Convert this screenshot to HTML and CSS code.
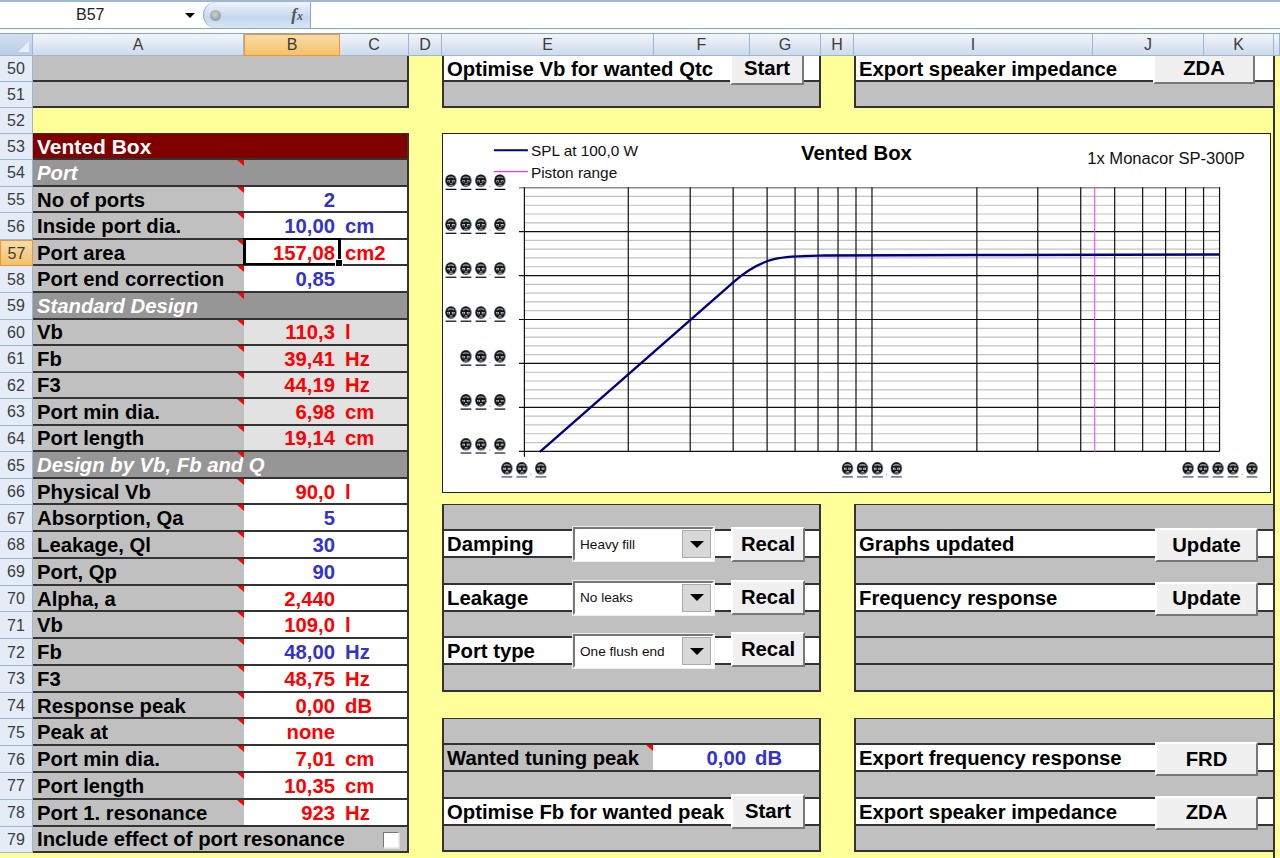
FILE: index.html
```html
<!DOCTYPE html>
<html>
<head>
<meta charset="utf-8">
<title>Vented Box</title>
<link rel="stylesheet" href="styles.css">
</head>
<body>
<svg class="defs" width="0" height="0">
  <symbol id="sk" viewBox="0 0 12 16">
    <ellipse cx="6" cy="6.5" rx="6" ry="6.5" fill="#7f93ad"/>
    <ellipse cx="5.8" cy="6.4" rx="5.2" ry="6" fill="#161616"/>
    <path d="M2.4 3.6C4 1.8 8 1.8 9.6 3.6L8.6 4.4C7 3.3 5 3.3 3.4 4.4Z" fill="#8d8d8d"/>
    <path d="M2.2 6H5V8.2H2.8Z" fill="#e4e4e4"/>
    <path d="M6.8 6H9.8L9.2 8.2H7Z" fill="#e4e4e4"/>
    <path d="M3.2 6.6H4.4V7.8H3.2ZM7.6 6.6H8.8V7.8H7.6Z" fill="#000"/>
    <path d="M5 9.2H7.4V10.2H5ZM4 10.8H8.2V11.6H4Z" fill="#a8a8a8"/>
    <path d="M.6 14.6H11.4V15.8H.6Z" fill="#000"/>
  </symbol>
</svg>

<header class="fbar">
  <div class="namebox"><span class="cellref">B57</span><i class="caret"></i></div>
  <div class="fxbtn"><i class="ball"></i><em class="fx">f<small>x</small></em></div>
  <div class="finput"></div>
</header>

<nav class="cols">
  <div class="corner"><i></i></div>
  <div class="ch w211">A</div><div class="ch w96 on">B</div><div class="ch w69">C</div><div class="ch w33">D</div>
  <div class="ch w212">E</div><div class="ch w96">F</div><div class="ch w71">G</div><div class="ch w33">H</div>
  <div class="ch w239">I</div><div class="ch w111">J</div><div class="ch w70">K</div><div class="ch rest"></div>
</nav>

<main class="sheet">
  <div class="heads">
    <div class="rh r50">50</div><div class="rh r51">51</div><div class="rh r52">52</div>
    <div class="rh r">53</div><div class="rh r">54</div><div class="rh r">55</div><div class="rh r">56</div>
    <div class="rh r on">57</div><div class="rh r">58</div><div class="rh r">59</div><div class="rh r">60</div>
    <div class="rh r">61</div><div class="rh r">62</div><div class="rh r">63</div><div class="rh r">64</div>
    <div class="rh r">65</div><div class="rh r">66</div>
    <div class="rh s">67</div><div class="rh s">68</div><div class="rh s">69</div><div class="rh s">70</div>
    <div class="rh s">71</div><div class="rh s">72</div><div class="rh s">73</div><div class="rh s">74</div>
    <div class="rh s">75</div><div class="rh s">76</div><div class="rh s">77</div><div class="rh s">78</div><div class="rh s">79</div>
  </div>

  <section class="left">
    <div class="row r50 gray"></div>
    <div class="row r51 gray"></div>
    <div class="r52"></div>
    <div class="row r maroon top">Vented Box</div>
    <div class="row r sect"><span class="a m">Port</span></div>
    <div class="row r"><span class="a m">No of ports</span><span class="b blue">2</span><span class="c"></span></div>
    <div class="row r"><span class="a m">Inside port dia.</span><span class="b blue">10,00</span><span class="c blue">cm</span></div>
    <div class="row r"><span class="a m">Port area</span><span class="b red sel">157,08</span><span class="c red">cm2</span></div>
    <div class="row r"><span class="a m">Port end correction</span><span class="b blue">0,85</span><span class="c"></span></div>
    <div class="row r sect"><span class="a m">Standard Design</span></div>
    <div class="row r lite"><span class="a m">Vb</span><span class="b red">110,3</span><span class="c red">l</span></div>
    <div class="row r lite"><span class="a m">Fb</span><span class="b red">39,41</span><span class="c red">Hz</span></div>
    <div class="row r lite"><span class="a m">F3</span><span class="b red">44,19</span><span class="c red">Hz</span></div>
    <div class="row r lite"><span class="a m">Port min dia.</span><span class="b red">6,98</span><span class="c red">cm</span></div>
    <div class="row r lite"><span class="a m">Port length</span><span class="b red">19,14</span><span class="c red">cm</span></div>
    <div class="row r sect"><span class="a m">Design by Vb, Fb and Q</span></div>
    <div class="row r"><span class="a m">Physical Vb</span><span class="b red">90,0</span><span class="c red">l</span></div>
    <div class="row s"><span class="a m">Absorption, Qa</span><span class="b blue">5</span><span class="c"></span></div>
    <div class="row s"><span class="a m">Leakage, Ql</span><span class="b blue">30</span><span class="c"></span></div>
    <div class="row s"><span class="a m">Port, Qp</span><span class="b blue">90</span><span class="c"></span></div>
    <div class="row s"><span class="a m">Alpha, a</span><span class="b red">2,440</span><span class="c"></span></div>
    <div class="row s"><span class="a m">Vb</span><span class="b red">109,0</span><span class="c red">l</span></div>
    <div class="row s"><span class="a m">Fb</span><span class="b blue">48,00</span><span class="c blue">Hz</span></div>
    <div class="row s"><span class="a m">F3</span><span class="b red">48,75</span><span class="c red">Hz</span></div>
    <div class="row s"><span class="a m">Response peak</span><span class="b red">0,00</span><span class="c red">dB</span></div>
    <div class="row s"><span class="a m">Peak at</span><span class="b red">none</span><span class="c"></span></div>
    <div class="row s"><span class="a m">Port min dia.</span><span class="b red">7,01</span><span class="c red">cm</span></div>
    <div class="row s"><span class="a m">Port length</span><span class="b red">10,35</span><span class="c red">cm</span></div>
    <div class="row s"><span class="a m">Port 1. resonance</span><span class="b red">923</span><span class="c red">Hz</span></div>
    <div class="row s gray chk-row"><span class="lbl">Include effect of port resonance</span><i class="chk"></i></div>
  </section>

  <section class="zone">
    <div class="pair">
      <div class="mid">
        <div class="row r50 white"><span class="lbl">Optimise Vb for wanted Qtc</span><button class="btn b-start0">Start</button></div>
        <div class="row r51 gray"></div>
        <div class="r52"></div>
      </div>
      <div class="rgt">
        <div class="row r50 white"><span class="lbl">Export speaker impedance</span><button class="btn b-zda0">ZDA</button></div>
        <div class="row r51 gray"></div>
        <div class="r52"></div>
      </div>
    </div>

    <div class="chart-slot">
      <svg class="chart" viewBox="442 133 830 360" width="830" height="360">
        <path class="minor" d="M524 196.3H1220M524 205.1H1220M524 213.9H1220M524 222.7H1220M524 240.3H1220M524 249.1H1220M524 257.9H1220M524 266.7H1220M524 284.3H1220M524 293.1H1220M524 301.9H1220M524 310.7H1220M524 328.3H1220M524 337.1H1220M524 345.9H1220M524 354.7H1220M524 372.3H1220M524 381.1H1220M524 389.9H1220M524 398.7H1220M524 416.3H1220M524 425.1H1220M524 433.9H1220M524 442.7H1220"/>
        <path class="topline" d="M519 187.5H1221"/>
        <path class="major" d="M519 231.5H1220M519 275.5H1220M519 319.5H1220M519 363.5H1220M519 407.5H1220M519 451.5H1220"/>
        <path class="major" d="M524.5 187V457M628.5 187V452M690.5 187V452M733.5 187V452M767.5 187V452M795.5 187V452M818.5 187V452M838.5 187V452M856.5 187V452M872.5 187V452M977.5 187V452M1038.5 187V452M1081.5 187V452M1115.5 187V452M1143.5 187V452M1166.5 187V452M1186.5 187V452M1204.5 187V452M1220.5 187V452"/>
        <path class="piston" d="M1095.5 187V452"/>
        <path class="spl" d="M540 452L735 281C765 255 785 256 825 255.5L975 255L1220 254.5"/>
        <path class="leg-spl" d="M494 150H528"/>
        <path class="leg-pis" d="M494 171.5H528"/>
        <text class="legend" x="531" y="156">SPL at 100,0 W</text>
        <text class="legend" x="531" y="178">Piston range</text>
        <text class="title" x="857" y="160" text-anchor="middle">Vented Box</text>
        <text class="driver" x="1088" y="164">1x Monacor SP-300P</text>
        <g class="ticks">
          <use href="#sk" x="445" y="174" width="12" height="16"/><use href="#sk" x="460" y="174" width="12" height="16"/><use href="#sk" x="475" y="174" width="12" height="16"/><use href="#sk" x="494" y="174" width="12" height="16"/>
          <use href="#sk" x="445" y="218" width="12" height="16"/><use href="#sk" x="460" y="218" width="12" height="16"/><use href="#sk" x="475" y="218" width="12" height="16"/><use href="#sk" x="494" y="218" width="12" height="16"/>
          <use href="#sk" x="445" y="262" width="12" height="16"/><use href="#sk" x="460" y="262" width="12" height="16"/><use href="#sk" x="475" y="262" width="12" height="16"/><use href="#sk" x="494" y="262" width="12" height="16"/>
          <use href="#sk" x="445" y="306" width="12" height="16"/><use href="#sk" x="460" y="306" width="12" height="16"/><use href="#sk" x="475" y="306" width="12" height="16"/><use href="#sk" x="494" y="306" width="12" height="16"/>
          <use href="#sk" x="460" y="350" width="12" height="16"/><use href="#sk" x="475" y="350" width="12" height="16"/><use href="#sk" x="494" y="350" width="12" height="16"/>
          <use href="#sk" x="460" y="394" width="12" height="16"/><use href="#sk" x="475" y="394" width="12" height="16"/><use href="#sk" x="494" y="394" width="12" height="16"/>
          <use href="#sk" x="460" y="438" width="12" height="16"/><use href="#sk" x="475" y="438" width="12" height="16"/><use href="#sk" x="494" y="438" width="12" height="16"/>
          <use href="#sk" x="501" y="462" width="12" height="16"/><use href="#sk" x="516" y="462" width="12" height="16"/><use href="#sk" x="535" y="462" width="12" height="16"/>
          <use href="#sk" x="842" y="462" width="12" height="16"/><use href="#sk" x="857" y="462" width="12" height="16"/><use href="#sk" x="872" y="462" width="12" height="16"/><use href="#sk" x="891" y="462" width="12" height="16"/>
          <use href="#sk" x="1183" y="462" width="12" height="16"/><use href="#sk" x="1198" y="462" width="12" height="16"/><use href="#sk" x="1213" y="462" width="12" height="16"/><use href="#sk" x="1228" y="462" width="12" height="16"/><use href="#sk" x="1247" y="462" width="12" height="16"/>
        </g>
        <path class="dots" d="M490 186v1M490 230v1M490 274v1M490 318v1M490 362v1M490 406v1M490 450v1M531 474v1M887 474v1M1243 474v1"/>
      </svg>
    </div>

    <div class="pair">
      <div class="mid">
        <div class="row s gray top"></div>
        <div class="row s white"><span class="lbl">Damping</span><div class="combo"><span>Heavy fill</span><i class="drop"></i></div><button class="btn b-recal">Recal</button></div>
        <div class="row s gray"></div>
        <div class="row s white"><span class="lbl">Leakage</span><div class="combo"><span>No leaks</span><i class="drop"></i></div><button class="btn b-recal up1">Recal</button></div>
        <div class="row s gray"></div>
        <div class="row s white"><span class="lbl">Port type</span><div class="combo"><span>One flush end</span><i class="drop"></i></div><button class="btn b-recal up2">Recal</button></div>
        <div class="row s gray"></div>
        <div class="s"></div>
        <div class="row s gray top"></div>
        <div class="row s white"><span class="a2 m">Wanted tuning peak</span><span class="b2 blue">0,00</span><span class="c2 blue">dB</span></div>
        <div class="row s gray"></div>
        <div class="row s white"><span class="lbl">Optimise Fb for wanted peak</span><button class="btn b-recal up1">Start</button></div>
        <div class="row s gray"></div>
      </div>
      <div class="rgt">
        <div class="row s gray top"></div>
        <div class="row s white"><span class="lbl">Graphs updated</span><button class="btn b-wide">Update</button></div>
        <div class="row s gray"></div>
        <div class="row s white"><span class="lbl">Frequency response</span><button class="btn b-wide">Update</button></div>
        <div class="row s gray"></div>
        <div class="row s gray"></div>
        <div class="row s gray"></div>
        <div class="s"></div>
        <div class="row s gray top"></div>
        <div class="row s white"><span class="lbl">Export frequency response</span><button class="btn b-wide">FRD</button></div>
        <div class="row s gray"></div>
        <div class="row s white"><span class="lbl">Export speaker impedance</span><button class="btn b-wide">ZDA</button></div>
        <div class="row s gray"></div>
      </div>
    </div>
  </section>
</main>
</body>
</html>
```
FILE: styles.css
```css
* { box-sizing: border-box; }
html, body { margin: 0; height: 858px; overflow: hidden; }
body { font-family: "Liberation Sans", Arial, sans-serif; background: #ffff99; color: #000; }
.defs { position: absolute; }

/* formula bar */
.fbar { height: 34px; display: flex; background: #fff; border-top: 2px solid #9db8d4; padding-bottom: 5px; position: relative; border-bottom: 1px solid #86a6c6; }
.fbar::after { content: ""; position: absolute; left: 0; right: 0; bottom: 4px; height: 1px; background: #86a6c6; }
.namebox { width: 203px; display: flex; align-items: center; position: relative; font-size: 16px; color: #222; }
.cellref { margin-left: 76px; }
.caret { margin-left: 81px; width: 0; height: 0; border: 5px solid transparent; border-top: 5px solid #000; border-bottom: 0; }
.fxbtn { width: 108px; display: flex; align-items: center; justify-content: space-between; padding: 0 7px 0 6px; border: 1px solid #86a6c6; border-width: 0 1px 0 1px; border-radius: 13px 0 0 13px / 13px 0 0 13px; background: linear-gradient(#eef4fb, #c5d8ee 60%, #d8e5f4); }
.ball { width: 11px; height: 11px; border-radius: 50%; background: radial-gradient(circle at 45% 40%, #d0d0d0, #7c8894); }
.fx { font: italic bold 17px "Liberation Serif", serif; color: #555; }
.fx small { font-size: 12px; }
.finput { flex: 1; }

/* column headers */
.cols { height: 22px; display: flex; background: #fff; }
.corner { width: 33px; background: linear-gradient(#d3e0f0, #b8cde6); border: 1px solid #9eb6ce; border-width: 0 1px 1px 0; position: relative; }
.corner i { position: absolute; right: 3px; bottom: 3px; width: 0; height: 0; border-style: solid; border-width: 0 0 11px 11px; border-color: transparent transparent #e8eff8 transparent; }
.ch { display: flex; align-items: center; justify-content: center; font-size: 16px; color: #3c3c3c; background: linear-gradient(#f3f6fb, #dbe5f1 60%, #cddbec); border-right: 1px solid #9eb6ce; border-bottom: 1px solid #9eb6ce; }
.ch.on { background: linear-gradient(#f9dcaa, #f2c267); border: 1px solid #f29536; }
.w211 { width: 211px; } .w96 { width: 96px; } .w69 { width: 69px; } .w33 { width: 33px; }
.w212 { width: 212px; } .w71 { width: 71px; } .w239 { width: 239px; } .w111 { width: 111px; } .w70 { width: 70px; }
.rest { flex: 1; }

/* grid */
.sheet { display: flex; height: 802px; background: #ffff99; overflow: hidden; }
.heads { width: 33px; flex: none; }
.rh { display: flex; align-items: center; justify-content: center; font-size: 16px; color: #3c3c3c; background: #e4ecf7; border-right: 1px solid #9eb6ce; border-bottom: 1px solid #9eb6ce; padding-top: 1px; }
.rh.on { background: linear-gradient(#f9dcaa, #f2c267); border: 1px solid #f29536; }
.r50 { height: 26.4px; } .r51 { height: 26.1px; } .r52 { height: 25.2px; }
.r { height: 26.56px; } .s { height: 26.77px; }

.left { width: 376px; flex: none; }
.zone { width: 833px; margin-left: 33px; flex: none; border-right: 2px solid #333; }
.pair { display: flex; gap: 33px; }
.mid { width: 379px; flex: none; }
.rgt { width: 419px; flex: none; margin-right: -2px; }
.mid .row { border-left: 2px solid #333; }
.rgt .row { border-left: 2px solid #333; border-right: 0; }

.row { display: flex; align-items: center; font-size: 20.3px; font-weight: bold; border-bottom: 2px solid #333; border-right: 2px solid #333; position: relative; background: #fff; white-space: nowrap; }
.top { box-shadow: 0 -1px 0 #333; }
.gray { background: #c0c0c0; }
.white { background: #fff; }
.maroon { background: #800000; color: #fff; padding-left: 4px; font-size: 21px; padding-top: 2px; }
.sect { background: #969696; color: #fff; font-style: italic; }
.a { width: 211px; height: 100%; padding-left: 4px; display: flex; align-items: center; background: #c0c0c0; position: relative; flex: none; }
.sect .a { background: #969696; }
.m::after { content: ""; position: absolute; top: 0; right: 0; width: 0; height: 0; border-style: solid; border-width: 0 7px 6px 0; border-color: transparent #ff0000 transparent transparent; }
.b { width: 96px; height: 100%; padding-right: 5px; display: flex; align-items: center; justify-content: flex-end; flex: none; position: relative; }
.c { padding-left: 5px; height: 100%; flex: 1; display: flex; align-items: center; }
.lite .b, .lite .c { background: #e2e2e2; }
.blue { color: #3333cc; }
.red { color: #ff0000; }
.lbl { padding-left: 3px; }
.left .lbl { padding-left: 4px; }
.sel::before { content: ""; position: absolute; inset: -2px -1px -1px -1px; border: 2px solid #000; border-width: 2px 3px; }
.sel::after { content: ""; position: absolute; right: -3px; bottom: -3px; width: 6px; height: 6px; background: #000; border: 1px solid #fff; }
.chk { position: absolute; left: 350px; top: 5px; width: 16px; height: 16px; background: #fff; border: 1px solid; border-color: #777 #eee #eee #777; box-shadow: 1px 1px 0 #ddd; }

.a2 { width: 209px; height: 100%; padding-left: 3px; display: flex; align-items: center; background: #c0c0c0; position: relative; flex: none; }
.b2 { width: 95px; text-align: right; padding-right: 2px; flex: none; }
.c2 { padding-left: 7px; }
.a, .b, .c, .a2, .b2, .c2, .lbl { padding-top: 2px; }

/* form controls floating over cells */
.btn { position: absolute; font: bold 20.3px "Liberation Sans", Arial, sans-serif; color: #000; background: #f0f0f0; border: 2px solid; border-color: #fff #777 #777 #fff; padding: 0; z-index: 2; }
.b-start0 { left: 286px; top: -4px; width: 74px; height: 33px; }
.b-zda0 { left: 297px; top: -4px; width: 102px; height: 32px; }
.b-recal { left: 287px; top: -4px; width: 74px; height: 35px; }
.up1 { top: -5px; }
.up2 { top: -6px; }
.b-wide { left: 299px; top: -3px; width: 103px; height: 34px; }
.combo { position: absolute; left: 129px; top: -4px; width: 141px; height: 34px; background: #fff; border: 2px solid; border-color: #777 #fff #fff #777; box-shadow: 0 0 0 1px #eee; display: flex; align-items: center; font-size: 13.6px; font-weight: normal; padding-left: 5px; z-index: 2; }
.combo span { flex: 1; color: #111; }
.drop { width: 29px; height: 28px; background: #d8d8d8; border: 1px solid #aaa; display: flex; align-items: center; justify-content: center; margin-right: 1px; }
.drop::after { content: ""; border-style: solid; border-width: 7px 7px 0 7px; border-color: #000 transparent transparent transparent; }

/* chart */
.chart-slot { height: 371.84px; }
.chart { display: block; width: 829px; height: 360px; background: #fff; outline: 1px solid #222; outline-offset: -1px; margin-top: -1px; }
.minor { stroke: #c2c2c2; stroke-width: 1.2; fill: none; }
.topline { stroke: #8c8c8c; stroke-width: 1.5; fill: none; }
.major { stroke: #111; stroke-width: 1.2; fill: none; }
.piston { stroke: #ff33ff; stroke-width: 1; fill: none; }
.spl { stroke: #000080; stroke-width: 2.4; fill: none; }
.leg-spl { stroke: #000080; stroke-width: 2; fill: none; }
.leg-pis { stroke: #ff00ff; stroke-width: 1; fill: none; }
.legend { font-size: 15.4px; fill: #111; }
.title { font-size: 20.4px; font-weight: bold; fill: #000; }
.driver { font-size: 16.6px; fill: #111; }
.dots { stroke: #888; stroke-width: 1; fill: none; }
```
